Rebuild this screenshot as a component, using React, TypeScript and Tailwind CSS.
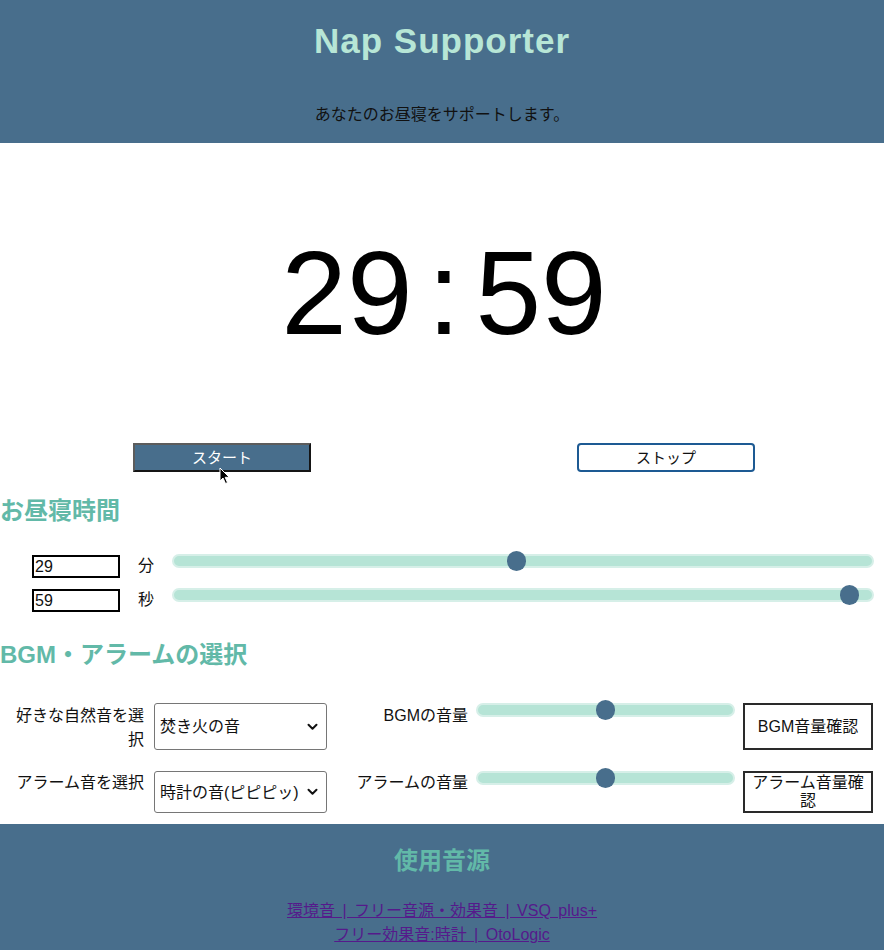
import React from "react";

function Slider({ frac, width }: { frac: number; width: number }) {
  const left = frac * (width - 20);
  return (
    <div className="relative h-[20px]" style={{ width }}>
      <div className="absolute left-0 right-0 top-[3px] h-[14px] rounded-full bg-[#b6e4d6] border-2 border-[#d6efe8]" />
      <div
        className="absolute top-0 h-[20px] w-[19px] rounded-full bg-[#486e8c]"
        style={{ left }}
      />
    </div>
  );
}

function Chevron() {
  return (
    <svg width="11" height="8" viewBox="0 0 11 8" className="shrink-0">
      <path d="M1.5 1.8 L5.5 5.8 L9.5 1.8" fill="none" stroke="#111" strokeWidth="2" strokeLinecap="round" strokeLinejoin="round" />
    </svg>
  );
}

export default function App() {
  const jp = "font-['Liberation_Sans','Noto_Sans_CJK_JP',sans-serif]";
  return (
    <div className={`w-[884px] bg-white text-[#111] ${jp}`}>
      <header className="h-[143px] bg-[#486e8c] flex flex-col items-center">
        <h1 className="mt-[20px] text-[35px] leading-[42px] font-bold text-[#b7e6d6] tracking-[1px]">
          Nap Supporter
        </h1>
        <p className="mt-[41px] text-[16px] leading-[24px] text-[#111]">
          あなたのお昼寝をサポートします。
        </p>
      </header>

      <div className="mt-[91px] flex justify-center pl-[4px] font-['Liberation_Sans',Arial,sans-serif] text-[118px] leading-[118px] text-black">
        <span>29</span>
        <span className="mx-[15px]">:</span>
        <span>59</span>
      </div>

      <div className="mt-[91px] flex relative">
        <div className="w-1/2 flex justify-center pl-[2px]">
          <button className="w-[178px] h-[29px] bg-[#486e8c] text-white text-[15px] leading-[20px] border-2 border-t-[#5c5c5c] border-l-[#5c5c5c] border-b-[#151515] border-r-[#151515]">
            スタート
          </button>
        </div>
        <div className="w-1/2 flex justify-center pl-[6px]">
          <button className="w-[178px] h-[29px] bg-white text-[#111] text-[15px] leading-[20px] border-2 border-[#1d5a93] rounded-[4px]">
            ストップ
          </button>
        </div>
        <svg className="absolute left-[219px] top-[24px]" width="12" height="18" viewBox="0 0 12 18">
          <path d="M1 1 L1 14 L4 11 L6.5 16.5 L8.5 15.6 L6.2 10.3 L10.3 10.3 Z" fill="#000" stroke="#fff" strokeWidth="1" strokeLinejoin="round" />
        </svg>
      </div>

      <h2 className="mt-[23px] text-[24px] leading-[32px] font-bold text-[#62b9a8]">お昼寝時間</h2>

      <div className="mt-[24px] flex flex-col gap-[7px]">
        <div className="flex items-start h-[27px]">
          <input
            readOnly
            value="29"
            className="ml-[32px] mt-[4px] w-[88px] h-[23px] border-2 border-black px-[1px] text-[16px] leading-[19px] font-['Liberation_Sans',Arial,sans-serif] outline-none"
          />
          <span className="mt-[3px] w-[52px] text-center text-[16px] leading-[24px]">分</span>
          <Slider frac={29 / 59} width={702} />
        </div>
        <div className="flex items-start h-[27px]">
          <input
            readOnly
            value="59"
            className="ml-[32px] mt-[4px] w-[88px] h-[23px] border-2 border-black px-[1px] text-[16px] leading-[19px] font-['Liberation_Sans',Arial,sans-serif] outline-none"
          />
          <span className="mt-[3px] w-[52px] text-center text-[16px] leading-[24px]">秒</span>
          <Slider frac={0.98} width={702} />
        </div>
      </div>

      <h2 className="mt-[27px] text-[24px] leading-[32px] font-bold text-[#62b9a8]">BGM・アラームの選択</h2>

      <div className="mt-[29px] grid grid-cols-[146px_173px_133px_259px_130px] gap-x-[8px] gap-y-[16px] items-start text-[16px]">
        <div className="mt-[4px] pl-[16px] pr-[2px] text-right leading-[24px]">好きな自然音を選択</div>
        <div className="mt-[3px] h-[47px] border border-[#767676] rounded-[3px] flex items-center justify-between pl-[5px] pr-[8px]">
          <span>焚き火の音</span>
          <Chevron />
        </div>
        <div className="mt-[4px] text-right leading-[24px]">BGMの音量</div>
        <Slider frac={0.5} width={259} />
        <button className="mt-[3px] h-[47px] border-2 border-[#2a2a2a] bg-white text-[16px] leading-[18px]">
          BGM音量確認
        </button>

        <div className="mt-[3px] text-right pr-[2px] leading-[24px] whitespace-nowrap">アラーム音を選択</div>
        <div className="mt-[3px] h-[42px] border border-[#767676] rounded-[3px] flex items-center justify-between pl-[5px] pr-[8px]">
          <span className="pt-[2px] whitespace-nowrap">時計の音(ピピピッ)</span>
          <Chevron />
        </div>
        <div className="mt-[3px] text-right leading-[24px] whitespace-nowrap">アラームの音量</div>
        <Slider frac={0.5} width={259} />
        <button className="mt-[3px] h-[42px] border-2 border-[#2a2a2a] bg-white text-[16px] leading-[18px] px-[6px]">
          アラーム音量確認
        </button>
      </div>

      <footer className="mt-[11px] bg-[#486e8c] pt-[21px] pb-[20px] flex flex-col items-center">
        <h2 className="text-[24px] leading-[32px] font-bold text-[#62b9a8]">使用音源</h2>
        <a href="#" className="mt-[22px] text-[16px] leading-[24px] text-[#551a8b] underline [word-spacing:3px]">
          環境音 | フリー音源・効果音 | VSQ plus+
        </a>
        <a href="#" className="text-[16px] leading-[24px] text-[#551a8b] underline [word-spacing:3px]">
          フリー効果音:時計 | OtoLogic
        </a>
      </footer>
    </div>
  );
}
